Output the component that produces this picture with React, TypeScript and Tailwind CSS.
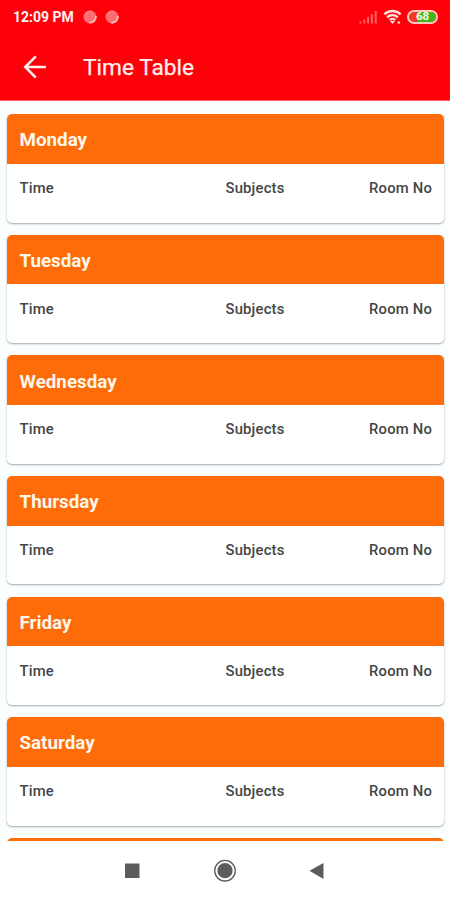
import { type ReactNode } from "react";

const days = ["Monday", "Tuesday", "Wednesday", "Thursday", "Friday", "Saturday"];

export default function App() {
  return (
    <main className="flex h-[900px] w-[450px] flex-col overflow-hidden bg-[#fafeff] font-[Roboto,sans-serif]">
      <header className="h-[101px] shrink-0 border-b border-[#ff5a60] bg-[#fe0009] text-[#fff0ee]">
        <StatusBar />
        <div className="flex h-[67px] items-center">
          <button type="button" aria-label="Back" className="ml-[23px] mr-[36px]">
            <BackArrow />
          </button>
          <h1 className="pt-[3px] text-[22.7px] leading-none [-webkit-text-stroke:0.25px]">Time Table</h1>
        </div>
      </header>

      <section className="flex min-h-0 flex-1 flex-col gap-[12.2px] overflow-hidden pl-[7px] pr-[6px] pt-[13.3px]">
        {days.map((day) => (
          <DayCard key={day} day={day} />
        ))}
        <div className="h-[49.6px] shrink-0 rounded-t-[5px] bg-[#fd6c09]" />
      </section>

      <NavigationBar />
    </main>
  );
}

function StatusBar() {
  return (
    <div className="flex h-[33px] items-center pl-[13px] pr-[12px]">
      <span className="w-[62px] whitespace-nowrap text-[14px] font-bold leading-none">12:09 PM</span>
      <div className="ml-[8px] flex gap-[8px]">
        <NotificationDot />
        <NotificationDot />
      </div>
      <div className="ml-auto flex items-center">
        <SignalIcon />
        <WifiIcon />
        <Battery level={68} />
      </div>
    </div>
  );
}

function DayCard({ day }: { day: string }) {
  return (
    <article className="h-[108.4px] shrink-0 overflow-hidden rounded-[5px] bg-white shadow-[0_1px_2px_rgba(40,50,55,0.42)]">
      <h2 className="flex h-[49.6px] items-center bg-[#fd6c09] pl-[12.5px] pt-[3.6px] text-[18.8px] font-bold leading-none text-[#fff6ec]">
        {day}
      </h2>
      <div className="grid grid-cols-[206px_1fr_auto] pl-[12.5px] pr-[12px] pt-[15.4px] text-[14.8px] font-medium leading-[18px] tracking-[0.2px] text-[#454545]">
        <ColumnLabel>Time</ColumnLabel>
        <ColumnLabel>Subjects</ColumnLabel>
        <ColumnLabel>Room No</ColumnLabel>
      </div>
    </article>
  );
}

function ColumnLabel({ children }: { children: ReactNode }) {
  return <span>{children}</span>;
}

function NavigationBar() {
  return (
    <nav className="flex h-[59px] shrink-0 bg-white text-[#5c5c5c]">
      <svg className="h-full w-full" viewBox="0 0 450 59" fill="currentColor">
        <rect x="125" y="22.5" width="14.5" height="14.5" />
        <circle cx="225" cy="29.7" r="10.3" fill="none" stroke="currentColor" strokeWidth="1.3" />
        <circle cx="225" cy="29.7" r="7.6" />
        <path d="M309.5 29.8 323.5 22v16z" />
      </svg>
    </nav>
  );
}

function BackArrow() {
  return (
    <svg className="h-6 w-6" viewBox="0 0 24 24" fill="none" stroke="currentColor" strokeWidth="2.5">
      <path d="M23 12H2.5M12.8 1.3 2.2 12l10.6 10.7" />
    </svg>
  );
}

function NotificationDot() {
  return (
    <svg className="h-[14px] w-[14px]" viewBox="0 0 14 14">
      <circle cx="7" cy="7" r="6.5" fill="#ff6f72" />
      <path d="M6.5 12.6A5.8 5.8 0 0 0 12.8 6" fill="none" stroke="#ffc4c0" strokeWidth="1.6" />
      <path d="M2 5.5A5.5 5.5 0 0 1 9 1.5" fill="none" stroke="#ff9a9b" />
    </svg>
  );
}

function SignalIcon() {
  return (
    <svg className="mr-[6px] h-[14px] w-[18px]" viewBox="0 0 18 14" fill="#ff6265">
      <rect x="0.5" y="11.5" width="2" height="2" />
      <rect x="4.3" y="9.5" width="2" height="4" />
      <rect x="8.1" y="6.8" width="2" height="6.7" />
      <rect x="11.9" y="4" width="2" height="9.5" />
      <rect x="15.7" y="1" width="2" height="12.5" />
    </svg>
  );
}

function WifiIcon() {
  return (
    <svg className="mr-[5px] h-[15px] w-[19px]" viewBox="0 0 18 15" fill="none" stroke="#ffe0dd" strokeWidth="2.4">
      <path d="M.9 5.3a11.5 11.5 0 0 1 16.2 0M3.6 8.3a7.6 7.6 0 0 1 10.8 0M6.3 11a3.8 3.8 0 0 1 5.4 0" />
      <path d="M6.5 12h5L9 15z" fill="#ffe0dd" stroke="none" />
      <path d="M14 12.5h2.6v2H14z" fill="#ffe0dd" stroke="none" />
    </svg>
  );
}

function Battery({ level }: { level: number }) {
  return (
    <div className="relative flex h-[14px] w-[31px] items-center justify-center overflow-hidden rounded-full border-2 border-[#ffc9be] bg-[#f03a26]">
      <div className="absolute inset-y-0 right-0 bg-[#43b51b]" style={{ width: `${level}%` }} />
      <span className="relative text-[11.5px] font-bold leading-none text-[#f5ffe9]">{level}</span>
    </div>
  );
}
